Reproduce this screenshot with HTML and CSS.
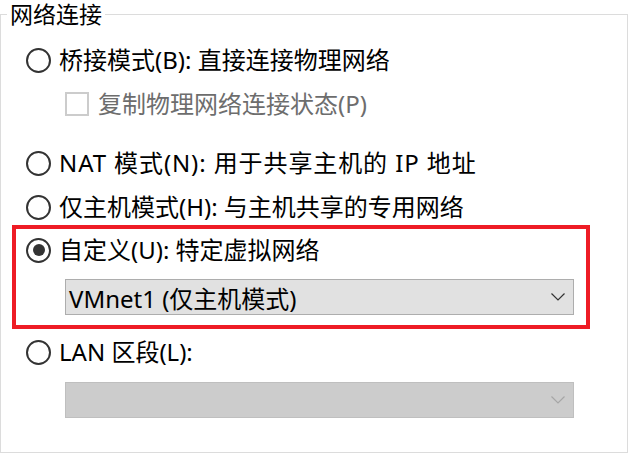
FILE: index.html
```html
<!DOCTYPE html>
<html lang="zh-CN">
<head>
<meta charset="utf-8">
<title>网络连接</title>
<link rel="stylesheet" href="styles.css">
</head>
<body>
<fieldset class="group">
  <legend class="group-title">网络连接</legend>
  <div class="opt opt-first">
    <span class="radio"></span>
    <span class="text">桥接模式(B): 直接连接物理网络</span>
  </div>
  <div class="opt opt-check">
    <span class="check"></span>
    <span class="text text-dim">复制物理网络连接状态(P)</span>
  </div>
  <div class="opt opt-nat">
    <span class="radio"></span>
    <span class="text text-wide">NAT 模式(N): 用于共享主机的 IP 地址</span>
  </div>
  <div class="opt opt-host">
    <span class="radio"></span>
    <span class="text">仅主机模式(H): 与主机共享的专用网络</span>
  </div>
  <div class="highlight">
    <div class="opt opt-inner">
      <span class="radio radio-on"></span>
      <span class="text">自定义(U): 特定虚拟网络</span>
    </div>
    <div class="select-row select-row-inner">
      <div class="select">
        <span class="select-value">VMnet1 (仅主机模式)</span>
        <svg class="chev" width="14" height="8" viewBox="0 0 14 8"><path d="M0.5 0.5 L7 7 L13.5 0.5" fill="none" stroke="#333" stroke-width="1.2"/></svg>
      </div>
    </div>
  </div>
  <div class="opt opt-lan">
    <span class="radio"></span>
    <span class="text">LAN 区段(L):</span>
  </div>
  <div class="select-row">
    <div class="select select-disabled">
      <span class="select-value"></span>
      <svg class="chev" width="14" height="8" viewBox="0 0 14 8"><path d="M0.5 0.5 L7 7 L13.5 0.5" fill="none" stroke="#a6a6a6" stroke-width="1.2"/></svg>
    </div>
  </div>
</fieldset>
</body>
</html>
```

FILE: styles.css
```css
html, body {
  margin: 0;
  padding: 0;
  background: #ffffff;
}
body {
  width: 629px;
  height: 454px;
  overflow: hidden;
  font-family: "Noto Sans", "Noto Sans CJK SC", sans-serif;
  font-size: 24px;
  color: #000;
}
.group {
  box-sizing: border-box;
  margin: 0;
  width: 628px;
  height: 453px;
  border: 1px solid #dcdcdc;
  padding: 0 0 0 11px;
  display: flex;
  flex-direction: column;
  min-inline-size: 0;
}
.group-title {
  margin-left: -5px;
  padding: 0 3px;
  line-height: 28px;
  height: 28px;
  font-size: 23px;
}
.opt {
  display: flex;
  align-items: center;
  height: 36px;
  padding-left: 14px;
  line-height: 36px;
  white-space: nowrap;
}
.opt-first { margin-top: 14px; }
.opt-check { margin-top: 8px; padding-left: 53px; }
.opt-nat { margin-top: 23px; }
.opt-host { margin-top: 8px; }
.opt-lan { margin-top: 5px; }
.text-wide { letter-spacing: 0.9px; }
.radio {
  box-sizing: border-box;
  width: 25px;
  height: 25px;
  border: 2.4px solid #333;
  border-radius: 50%;
  flex: none;
  margin-right: 8px;
  display: flex;
  align-items: center;
  justify-content: center;
}
.radio-on::after {
  content: "";
  width: 12px;
  height: 12px;
  border-radius: 50%;
  background: #333;
}
.check {
  box-sizing: border-box;
  width: 24px;
  height: 24px;
  border: 2px solid #cccccc;
  flex: none;
  margin-right: 9px;
}
.text-dim { color: #6d6d6d; }
.highlight {
  box-sizing: border-box;
  width: 578px;
  height: 104px;
  border: 4px solid #ee1c25;
  padding-top: 3px;
  display: flex;
  flex-direction: column;
}
.opt-inner { padding-left: 10px; }
.select-row {
  padding-left: 53px;
  margin-top: 12px;
}
.select-row-inner {
  padding-left: 49px;
  margin-top: 11px;
}
.select {
  box-sizing: border-box;
  width: 509px;
  height: 36px;
  background: #e1e1e1;
  border: 1px solid #adadad;
  display: flex;
  align-items: center;
  justify-content: space-between;
  padding: 0 8px 0 3px;
  font-size: 24px;
  white-space: nowrap;
}
.select-disabled {
  background: #cccccc;
  border-color: #bfbfbf;
}
.chev { flex: none; }
```
